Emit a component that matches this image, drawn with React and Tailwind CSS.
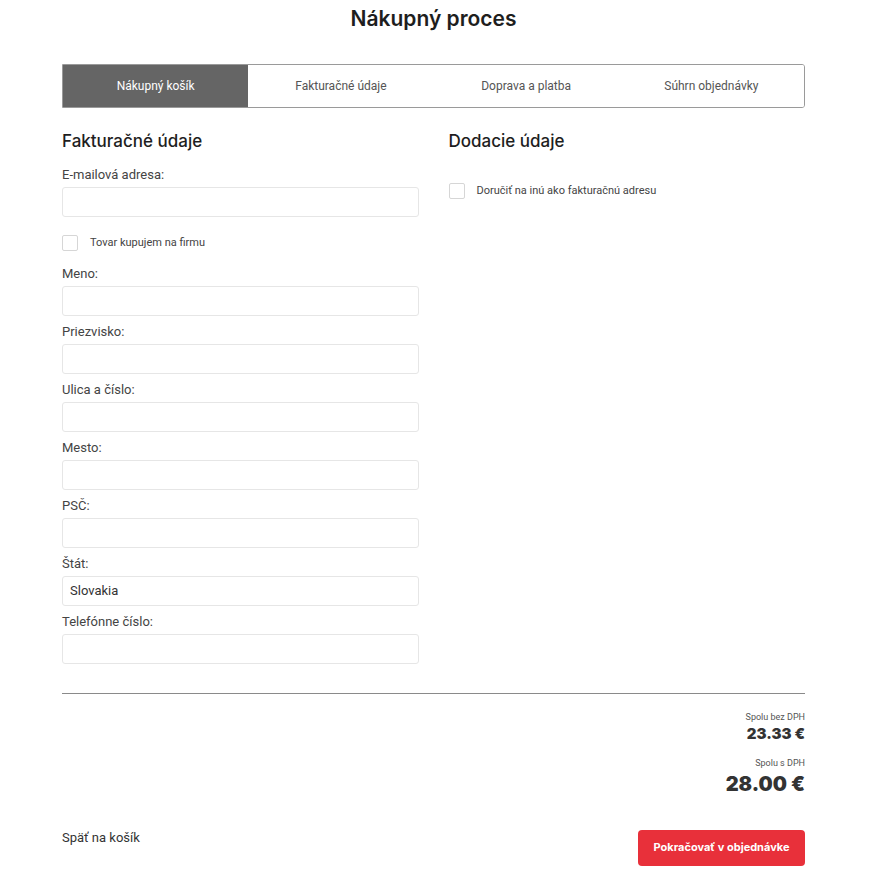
import React from 'react';

const tabs = ['Nákupný košík', 'Fakturačné údaje', 'Doprava a platba', 'Súhrn objednávky'];

const fields = [
  { label: 'Meno:', value: '' },
  { label: 'Priezvisko:', value: '' },
  { label: 'Ulica a číslo:', value: '' },
  { label: 'Mesto:', value: '' },
  { label: 'PSČ:', value: '' },
  { label: 'Štát:', value: 'Slovakia' },
  { label: 'Telefónne číslo:', value: '' },
];

const Field = ({ label, value }) => (
  <div className="flex flex-col">
    <label className="text-[13px] leading-4 text-[#444] mb-[4px]">{label}</label>
    <input
      type="text"
      defaultValue={value}
      className="h-[30px] w-full rounded-[3px] border border-[#e6e6e6] px-[7px] text-[13px] text-[#333] outline-none"
    />
  </div>
);

const Checkbox = ({ label }) => (
  <label className="flex items-center gap-[12px]">
    <span className="block w-[16px] h-[16px] border border-[#d6d6d6] rounded-[2px] bg-white" />
    <span className="text-[11px] text-[#444]">{label}</span>
  </label>
);

const App = () => {
  return (
    <div className="min-h-[870px] bg-white font-['Roboto',_'Liberation_Sans',_sans-serif] text-[#222]">
      <div className="w-[743px] ml-[62px]">
        <h1 className="text-center text-[21px] font-semibold leading-[28px] pt-[5px] text-[#1e1e1e] font-['Inter',_sans-serif]">
          Nákupný proces
        </h1>

        <div className="mt-[31px] flex h-[44px] border border-[#9a9a9a] rounded-r-[3px] overflow-hidden">
          {tabs.map((t, i) => (
            <div
              key={t}
              className={`flex-1 flex items-center justify-center text-[12px] ${
                i === 0 ? 'bg-[#656565] text-white' : 'bg-white text-[#555]'
              }`}
            >
              {t}
            </div>
          ))}
        </div>

        <div className="grid grid-cols-2 gap-[30px] mt-[22px]">
          {/* Billing */}
          <div>
            <h2 className="text-[17px] font-medium leading-[22px] text-[#1e1e1e] font-['Inter',_sans-serif]">Fakturačné údaje</h2>
            <div className="mt-[15px]">
              <Field label="E-mailová adresa:" value="" />
            </div>
            <div className="mt-[18px]">
              <Checkbox label="Tovar kupujem na firmu" />
            </div>
            <div className="mt-[14px] flex flex-col gap-[8px]">
              {fields.map(f => (
                <Field key={f.label} label={f.label} value={f.value} />
              ))}
            </div>
          </div>

          {/* Delivery */}
          <div>
            <h2 className="text-[17px] font-medium leading-[22px] text-[#1e1e1e] font-['Inter',_sans-serif]">Dodacie údaje</h2>
            <div className="mt-[31px]">
              <Checkbox label="Doručiť na inú ako fakturačnú adresu" />
            </div>
          </div>
        </div>

        <div className="mt-[29px] border-t border-[#8a8a8a]" />

        <div className="flex flex-col items-end mt-[17px]">
          <span className="text-[9px] leading-3 text-[#555]">Spolu bez DPH</span>
          <span className="text-[15px] leading-5 font-black text-[#333] mt-[1px] font-['Inter',_sans-serif]">23.33 €</span>
          <span className="text-[9px] leading-3 text-[#555] mt-[13px]">Spolu s DPH</span>
          <span className="text-[20px] leading-6 font-black text-[#333] mt-[3px] font-['Inter',_sans-serif]">28.00 €</span>
        </div>

        <div className="flex items-center justify-between mt-[34px]">
          <a className="text-[13px] text-[#333] -mt-[20px]">Späť na košík</a>
          <button className="w-[167px] h-[36px] rounded-[4px] bg-[#e8303a] text-white text-[11px] font-bold font-['Inter',_sans-serif]">
            Pokračovať v objednávke
          </button>
        </div>
      </div>
    </div>
  );
};

export default App;
